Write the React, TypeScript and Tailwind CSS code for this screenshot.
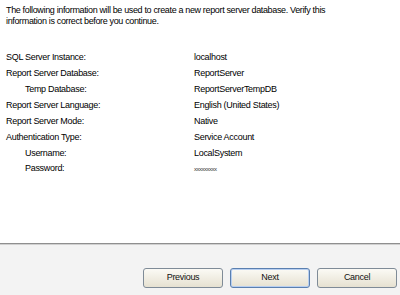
import React from "react";

const rows: { label: string; value: string; indent?: boolean; pw?: boolean }[] = [
  { label: "SQL Server Instance:", value: "localhost" },
  { label: "Report Server Database:", value: "ReportServer" },
  { label: "Temp Database:", value: "ReportServerTempDB", indent: true },
  { label: "Report Server Language:", value: "English (United States)" },
  { label: "Report Server Mode:", value: "Native" },
  { label: "Authentication Type:", value: "Service Account" },
  { label: "Username:", value: "LocalSystem", indent: true },
  { label: "Password:", value: "xxxxxxxxx", indent: true, pw: true },
];

function Btn({ children, def }: { children: React.ReactNode; def?: boolean }) {
  return (
    <div
      className={
        "w-[80px] h-[20px] rounded-[3px] border flex items-center justify-center text-[9px] tracking-[-0.3px] text-[#111] bg-gradient-to-b from-[#fbfaf5] to-[#e6e1d1] " +
        (def ? "border-[#5a7fb0] shadow-[inset_0_0_0_1px_#b8cff0]" : "border-[#7f8b97]")
      }
    >
      {children}
    </div>
  );
}

export default function App() {
  return (
    <div
      className="w-[400px] h-[295px] flex flex-col bg-white text-black"
      style={{ fontFamily: '"Liberation Sans", Arial, sans-serif' }}
    >
      <div className="flex-1 pl-[6px] pt-[5px]">
        <p className="text-[9px] leading-[11px] tracking-[-0.35px] w-[360px]">
          The following information will be used to create a new report server database. Verify this information is
          correct before you continue.
        </p>
        <div className="mt-[23px] flex flex-col text-[9px] tracking-[-0.3px]">
          {rows.map((r) => (
            <div key={r.label} className={r.pw ? "flex h-[14px] items-center" : "flex h-[16px] items-center"}>
              <div className={"w-[188px] " + (r.indent ? "pl-[19px]" : "")}>{r.label}</div>
              <div className={r.pw ? "text-[6px] tracking-[-0.5px] text-[#333]" : ""}>{r.value}</div>
            </div>
          ))}
        </div>
      </div>
      <div className="h-[2px] bg-[#8f8f8f] border-b border-[#d0d0d0]" />
      <div className="h-[50px] bg-[#f3f3f3] flex items-start justify-end gap-[7px] pt-[23px] pr-[3px]">
        <Btn>Previous</Btn>
        <Btn def>Next</Btn>
        <Btn>Cancel</Btn>
      </div>
    </div>
  );
}
